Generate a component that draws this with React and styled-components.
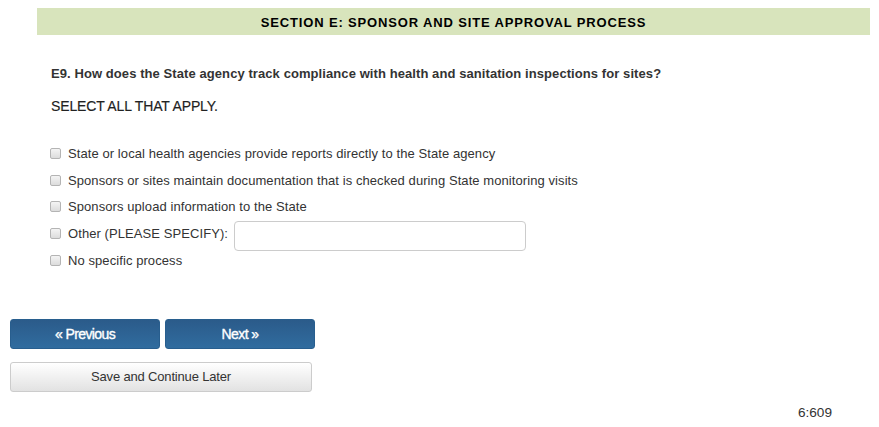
import React, { useState } from 'react';
import styled, { createGlobalStyle } from 'styled-components';

const GlobalStyle = createGlobalStyle`
  body {
    margin: 0;
    background: #fff;
    font-family: "Liberation Sans", Arial, sans-serif;
    color: #333;
  }
`;

const Page = styled.div`
  width: 879px;
  height: 427px;
  padding-top: 8px;
  box-sizing: border-box;
  display: flex;
  flex-direction: column;
`;

const SectionBar = styled.div`
  margin: 0 9px 0 37px;
  height: 27px;
  background-color: #d8e4bc;
  display: flex;
  align-items: center;
  justify-content: center;
  font-size: 13px;
  font-weight: bold;
  letter-spacing: 0.85px;
  color: #000;
  padding-top: 1px;
  box-sizing: border-box;
`;

const Body = styled.div`
  padding: 30px 0 0 51px;
  display: flex;
  flex-direction: column;
`;

const Question = styled.div`
  font-size: 13px;
  font-weight: bold;
  line-height: 18px;
  letter-spacing: 0.08px;
  color: #333;
`;

const Instruction = styled.div`
  margin-top: 14px;
  font-size: 14px;
  line-height: 18px;
  letter-spacing: -0.14px;
  color: #222;
  -webkit-text-stroke: 0.15px #222;
`;

const Options = styled.div`
  margin-top: 25px;
  display: flex;
  flex-direction: column;
`;

const OptionRow = styled.label`
  height: 26.75px;
  display: flex;
  align-items: center;
  gap: 7px;
  font-size: 13px;
  letter-spacing: 0.08px;
  color: #333;
  margin-left: -1px;
`;

const Check = styled.input`
  appearance: none;
  margin: 0;
  width: 11px;
  height: 11px;
  border: 1px solid #b4b4b4;
  border-radius: 2px;
  background: linear-gradient(#f4f4f4, #dcdcdc);
  box-sizing: border-box;
  flex: none;
  &:checked {
    background: #2d6496;
  }
`;

const SpecifyInput = styled.input`
  width: 292px;
  height: 30px;
  box-sizing: border-box;
  margin: 4px 0 0 -1px;
  border: 1px solid #ccc;
  border-radius: 4px;
  padding: 4px 8px;
  font-size: 13px;
  font-family: inherit;
  &:focus {
    outline: none;
    border-color: #66afe9;
  }
`;

const Nav = styled.div`
  margin-top: 45px;
  padding-left: 10px;
  display: flex;
  flex-direction: column;
  gap: 13px;
`;

const NavRow = styled.div`
  display: flex;
  gap: 5px;
`;

const NavButton = styled.button`
  width: 150px;
  height: 30px;
  border: 1px solid #285e8e;
  border-radius: 3px;
  background: linear-gradient(#2b5b8a, #306c9f);
  color: #fff;
  font-family: inherit;
  font-size: 14px;
  letter-spacing: -0.6px;
  -webkit-text-stroke: 0.35px #fff;
  cursor: pointer;
`;

const SaveButton = styled.button`
  width: 302px;
  height: 30px;
  border: 1px solid #ccc;
  border-radius: 3px;
  background: linear-gradient(#ffffff, #e2e2e2);
  color: #333;
  font-family: inherit;
  font-size: 13px;
  letter-spacing: -0.17px;
  cursor: pointer;
`;

const PageCode = styled.div`
  align-self: flex-end;
  margin: 13px 47px 0 0;
  font-size: 13.6px;
  color: #333;
`;

const options = [
  'State or local health agencies provide reports directly to the State agency',
  'Sponsors or sites maintain documentation that is checked during State monitoring visits',
  'Sponsors upload information to the State',
  'Other (PLEASE SPECIFY):',
  'No specific process',
];

const App = () => {
  const [checked, setChecked] = useState({});
  const [other, setOther] = useState('');

  return (
    <Page>
      <GlobalStyle />
      <SectionBar>SECTION E: SPONSOR AND SITE APPROVAL PROCESS</SectionBar>
      <Body>
        <Question>
          E9. How does the State agency track compliance with health and sanitation inspections for sites?
        </Question>
        <Instruction>SELECT ALL THAT APPLY.</Instruction>
        <Options>
          {options.map((text, i) => (
            <OptionRow key={i}>
              <Check
                type="checkbox"
                checked={!!checked[i]}
                onChange={() => setChecked({ ...checked, [i]: !checked[i] })}
              />
              {text}
              {i === 3 && (
                <SpecifyInput value={other} onChange={(e) => setOther(e.target.value)} />
              )}
            </OptionRow>
          ))}
        </Options>
      </Body>
      <Nav>
        <NavRow>
          <NavButton>« Previous</NavButton>
          <NavButton>Next »</NavButton>
        </NavRow>
        <SaveButton>Save and Continue Later</SaveButton>
      </Nav>
      <PageCode>6:609</PageCode>
    </Page>
  );
};

export default App;
